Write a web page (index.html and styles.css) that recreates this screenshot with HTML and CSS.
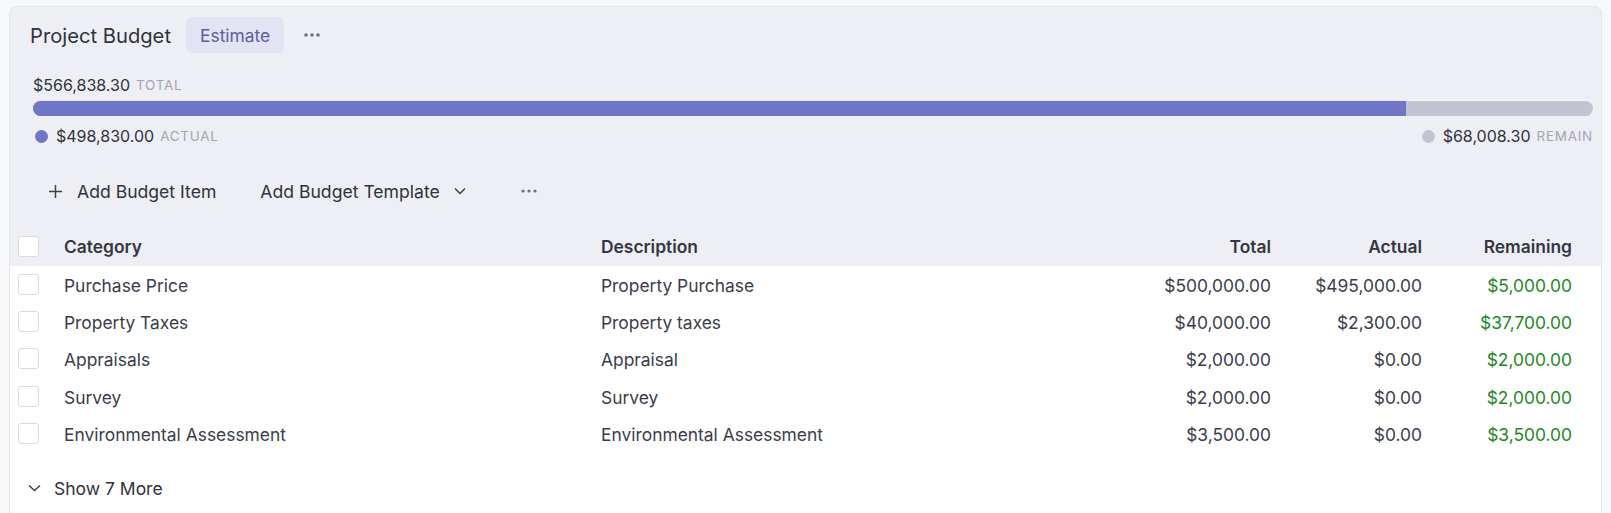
FILE: index.html
```html
<!DOCTYPE html>
<html>
<head>
<meta charset="utf-8">
<link rel="stylesheet" href="styles.css">
</head>
<body>
<div class="card">
  <div class="head">
    <h1 class="title">Project Budget</h1>
    <span class="badge">Estimate</span>
    <button class="icon-btn dots-btn" aria-label="More">
      <svg width="16" height="4" viewBox="0 0 16 4"><circle cx="2" cy="2" r="1.8"/><circle cx="8" cy="2" r="1.8"/><circle cx="14" cy="2" r="1.8"/></svg>
    </button>
  </div>

  <div class="summary">
    <div class="total-line"><span class="amt">$566,838.30</span><span class="lbl">TOTAL</span></div>
    <div class="bar"><div class="bar-fill" style="width: 88.0%"></div></div>
    <div class="legend">
      <div class="leg"><span class="dot dot-actual"></span><span class="amt">$498,830.00</span><span class="lbl">ACTUAL</span></div>
      <div class="leg"><span class="dot dot-remain"></span><span class="amt">$68,008.30</span><span class="lbl">REMAIN</span></div>
    </div>
  </div>

  <div class="toolbar">
    <button class="tbtn">
      <svg width="15" height="15" viewBox="0 0 15 15"><path d="M7.5 1v13M1 7.5h13" stroke="#3c3f4c" stroke-width="1.5" fill="none"/></svg>
      <span>Add Budget Item</span>
    </button>
    <button class="tbtn tbtn-tpl">
      <span>Add Budget Template</span>
      <svg width="12" height="8" viewBox="0 0 12 8"><path d="M1 1.5l5 5 5-5" stroke="#3c3f4c" stroke-width="1.5" fill="none"/></svg>
    </button>
    <button class="tbtn tbtn-dots" aria-label="More">
      <svg width="16" height="4" viewBox="0 0 16 4"><circle cx="2" cy="2" r="1.6"/><circle cx="8" cy="2" r="1.6"/><circle cx="14" cy="2" r="1.6"/></svg>
    </button>
  </div>

  <div class="table">
    <div class="row row-head">
      <div class="cell cb-cell"><span class="cb"></span></div>
      <div class="cell">Category</div>
      <div class="cell">Description</div>
      <div class="cell num">Total</div>
      <div class="cell num">Actual</div>
      <div class="cell num">Remaining</div>
    </div>
    <div class="body">
      <div class="row">
        <div class="cell cb-cell"><span class="cb"></span></div>
        <div class="cell">Purchase Price</div>
        <div class="cell">Property Purchase</div>
        <div class="cell num">$500,000.00</div>
        <div class="cell num">$495,000.00</div>
        <div class="cell num pos">$5,000.00</div>
      </div>
      <div class="row">
        <div class="cell cb-cell"><span class="cb"></span></div>
        <div class="cell">Property Taxes</div>
        <div class="cell">Property taxes</div>
        <div class="cell num">$40,000.00</div>
        <div class="cell num">$2,300.00</div>
        <div class="cell num pos">$37,700.00</div>
      </div>
      <div class="row">
        <div class="cell cb-cell"><span class="cb"></span></div>
        <div class="cell">Appraisals</div>
        <div class="cell">Appraisal</div>
        <div class="cell num">$2,000.00</div>
        <div class="cell num">$0.00</div>
        <div class="cell num pos">$2,000.00</div>
      </div>
      <div class="row">
        <div class="cell cb-cell"><span class="cb"></span></div>
        <div class="cell">Survey</div>
        <div class="cell">Survey</div>
        <div class="cell num">$2,000.00</div>
        <div class="cell num">$0.00</div>
        <div class="cell num pos">$2,000.00</div>
      </div>
      <div class="row">
        <div class="cell cb-cell"><span class="cb"></span></div>
        <div class="cell">Environmental Assessment</div>
        <div class="cell">Environmental Assessment</div>
        <div class="cell num">$3,500.00</div>
        <div class="cell num">$0.00</div>
        <div class="cell num pos">$3,500.00</div>
      </div>
      <button class="show-more">
        <svg width="13" height="8" viewBox="0 0 13 8"><path d="M1 1.5l5.5 5 5.5-5" stroke="#3c3f4c" stroke-width="1.5" fill="none"/></svg>
        <span>Show 7 More</span>
      </button>
    </div>
  </div>
</div>
</body>
</html>
```

FILE: styles.css
```css
* { box-sizing: border-box; }

html, body {
  margin: 0;
  padding: 0;
  background: #f7f8fa;
  font-family: Inter, "Noto Sans", "Liberation Sans", sans-serif;
  color: #3a3d4b;
  height: 513px;
  overflow: hidden;
}

button {
  font: inherit;
  color: inherit;
  background: none;
  border: 0;
  padding: 0;
  cursor: pointer;
}

.card {
  margin: 6px 0 0 9px;
  width: 1593px;
  height: 520px;
  background: #eeeff5;
  border: 1px solid #e5e6ed;
  border-radius: 8px 8px 0 0;
}

.head {
  display: flex;
  align-items: center;
  height: 36px;
  margin-top: 10px;
  padding-left: 20px;
}

.title {
  margin: 0;
  font-size: 20.2px;
  font-weight: 400;
  color: #2f3240;
}

.badge {
  margin-left: 15px;
  height: 36px;
  padding: 0 14px;
  display: flex;
  align-items: center;
  border-radius: 6px;
  background: #e3e4f3;
  color: #5c5f9f;
  font-size: 17.4px;
}

.dots-btn {
  margin-left: 20px;
  display: flex;
  align-items: center;
  fill: #6c6f7d;
}

.summary {
  padding: 0 8px 0 23px;
}

.total-line {
  margin-top: 22px;
  height: 20px;
  display: flex;
  align-items: center;
}

.amt {
  font-size: 16px;
  color: #2f3240;
}

.lbl {
  margin-left: 6px;
  font-size: 13.4px;
  letter-spacing: 0.06em;
  color: #a2a5b6;
}

.bar {
  margin-top: 6px;
  height: 15px;
  border-radius: 8px;
  background: #c2c4d1;
  overflow: hidden;
}

.bar-fill {
  height: 100%;
  background: #6f76c6;
}

.legend {
  margin-top: 10px;
  display: flex;
  justify-content: space-between;
  height: 20px;
}

.leg {
  display: flex;
  align-items: center;
}

.dot {
  width: 13px;
  height: 13px;
  border-radius: 50%;
  margin: 0 8px 0 2px;
}

.dot-actual { background: #6f76c6; }
.dot-remain { background: #c2c4d1; }

.toolbar {
  margin-top: 27px;
  height: 36px;
  display: flex;
  align-items: center;
  padding-left: 28px;
}

.tbtn {
  height: 36px;
  display: flex;
  align-items: center;
  padding: 0 10px;
  font-size: 17.6px;
  color: #2f3240;
}

.tbtn svg { flex: none; }

.tbtn > svg + span { margin-left: 14px; }
.tbtn > span + svg { margin-left: 14px; }

.tbtn-tpl { margin-left: 24px; }

.tbtn-dots {
  margin-left: 35px;
  fill: #6c6f7d;
}

.table {
  margin-top: 18px;
}

.row {
  display: grid;
  grid-template-columns: 54px 537px 1fr 150px 151px 150px;
  padding-right: 29px;
  height: 37.4px;
  align-items: center;
  font-size: 17.4px;
  color: #3a3d4b;
}

.body .row {
  padding-top: 2px;
}

.body .row .cb-cell {
  margin-top: -2px;
}

.row-head {
  height: 38.5px;
  font-weight: 600;
  color: #333644;
}

.body {
  background: #ffffff;
  height: 260px;
}

.cell {
  white-space: nowrap;
}

.num { text-align: right; }

.pos { color: #1d8a1d; }

.cb-cell {
  padding-left: 8px;
  display: flex;
  align-items: center;
}

.cb {
  width: 21px;
  height: 21px;
  border: 1px solid #d9dbe3;
  border-radius: 3px;
  background: #ffffff;
}

.show-more {
  margin-top: 18px;
  height: 36px;
  display: flex;
  align-items: center;
  padding-left: 18px;
  font-size: 17.5px;
  color: #2f3240;
}

.show-more span { margin-left: 13px; }
```
